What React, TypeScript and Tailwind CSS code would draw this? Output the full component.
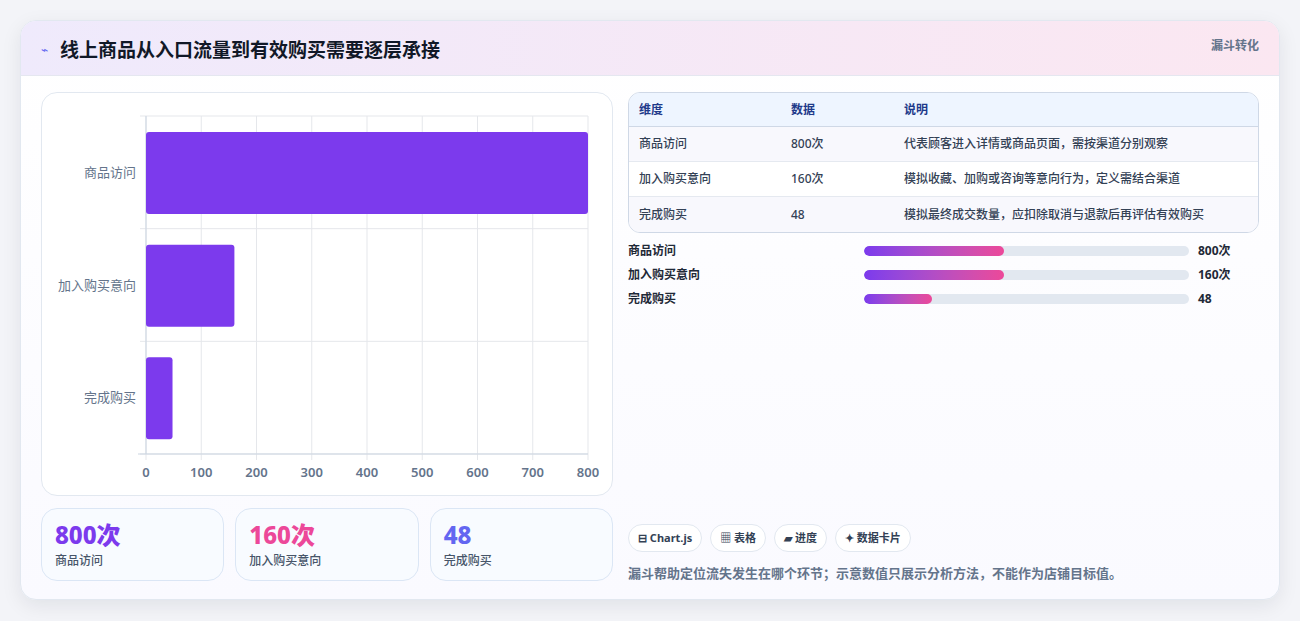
import React from "react";

const F = { fontFamily: '"Noto Sans", "Noto Sans CJK SC", sans-serif' };

function Chart() {
  const x0 = 104, x1 = 546, top = 23, bot = 361;
  const ticks = [0, 100, 200, 300, 400, 500, 600, 700, 800];
  const sx = (v: number) => x0 + ((x1 - x0) * v) / 800;
  const band = (bot - top) / 3;
  const data = [["商品访问", 800], ["加入购买意向", 160], ["完成购买", 48]] as const;
  return (
    <svg width="572" height="402" className="block">
      {ticks.map((t) => (
        <line key={t} x1={sx(t)} x2={sx(t)} y1={top} y2={bot + 6} stroke="#e5e7eb" />
      ))}
      {[0, 1, 2, 3].map((i) => (
        <line key={i} x1={x0 - 6} x2={x1} y1={top + band * i} y2={top + band * i} stroke="#e5e7eb" />
      ))}
      <line x1={x0 - 8} x2={x1} y1={bot} y2={bot} stroke="#cbd5e1" />
      <line x1={x0} x2={x0} y1={top} y2={bot} stroke="#cbd5e1" />
      {data.map(([l, v], i) => {
        const y = top + band * i + 16;
        return (
          <g key={l}>
            <rect x={x0} y={y} width={sx(v) - x0} height={82} rx={3} fill="#7c3aed" />
            <text x={94} y={y + 45} textAnchor="end" fontSize="13" fill="#64748b" style={F}>{l}</text>
          </g>
        );
      })}
      {ticks.map((t) => (
        <text key={t} x={sx(t)} y={384} textAnchor="middle" fontSize="13" fill="#64748b" style={F} fontWeight="600">{t}</text>
      ))}
    </svg>
  );
}

const bars = [["商品访问", "800次", "43%"], ["加入购买意向", "160次", "43%"], ["完成购买", "48", "21%"]];

export default function App() {
  return (
    <div className="w-[1300px] h-[621px] bg-[#f3f4f8] pt-5 px-5" style={F}>
      <div className="w-[1260px] h-[580px] rounded-2xl bg-gradient-to-b from-white to-[#fafaff] border border-[#e2e8f0] shadow-[0_6px_20px_rgba(15,23,42,0.08)] overflow-hidden flex flex-col">
        <div className="h-[55px] shrink-0 flex items-start justify-between px-5 bg-gradient-to-r from-[#efeafc] to-[#fbe7f1] border-b border-[#e5e7f0]">
          <div className="flex items-center gap-3 mt-[15px]">
            <span className="text-[#6366f1] text-[12px]">⌁</span>
            <h1 className="text-[19px] font-bold text-[#111827]">线上商品从入口流量到有效购买需要逐层承接</h1>
          </div>
          <div className="mt-[16px] text-[12px] font-bold text-[#64748b]">漏斗转化</div>
        </div>
        <div className="flex gap-[15px] px-5 pt-4">
          <div className="w-[572px] flex flex-col gap-3">
            <div className="h-[404px] rounded-2xl border border-[#e2e8f0] bg-white overflow-hidden">
              <Chart />
            </div>
            <div className="flex gap-[11px]">
              {[["800次", "商品访问", "text-[#7c3aed]"], ["160次", "加入购买意向", "text-[#ec4899]"], ["48", "完成购买", "text-[#6366f1]"]].map(([v, l, c]) => (
                <div key={l} className="flex-1 h-[73px] rounded-2xl border border-[#dbe6f5] bg-[#f8fbff] px-[13px] pt-[10px]">
                  <div className={`text-[24px] leading-[32px] font-extrabold ${c}`}>{v}</div>
                  <div className="text-[12px] text-[#475569] font-medium mt-[1px]">{l}</div>
                </div>
              ))}
            </div>
          </div>
          <div className="w-[633px] flex flex-col">
            <div className="rounded-xl border border-[#cfd8e6] overflow-hidden text-[12px]">
              <div className="flex h-[34px] items-center bg-[#eef5ff] border-b border-[#cfd8e6] font-bold text-[#1e3a8a] px-[10px]">
                <div className="w-[152px]">维度</div><div className="w-[113px]">数据</div><div>说明</div>
              </div>
              {[["商品访问", "800次", "代表顾客进入详情或商品页面，需按渠道分别观察"], ["加入购买意向", "160次", "模拟收藏、加购或咨询等意向行为，定义需结合渠道"], ["完成购买", "48", "模拟最终成交数量，应扣除取消与退款后再评估有效购买"]].map((r, i) => (
                <div key={i} className={`flex h-[35px] items-center px-[10px] font-medium text-[#334155] ${i % 2 ? "bg-white" : "bg-[#f8f8fd]"} ${i < 2 ? "border-b border-[#e5e9f0]" : ""}`}>
                  <div className="w-[152px]">{r[0]}</div><div className="w-[113px]">{r[1]}</div><div>{r[2]}</div>
                </div>
              ))}
            </div>
            <div className="flex flex-col gap-[6px] mt-[9px]">
              {bars.map(([l, v, w]) => (
                <div key={l} className="flex items-center h-[18px] text-[12px] font-semibold text-[#1f2937]">
                  <div className="w-[236px]">{l}</div>
                  <div className="w-[325px] h-[10px] rounded-full bg-[#e2e8f0] overflow-hidden">
                    <div className="h-full rounded-full bg-gradient-to-r from-[#7c3aed] to-[#ec4899]" style={{ width: w }} />
                  </div>
                  <div className="ml-[9px] font-bold">{v}</div>
                </div>
              ))}
            </div>
            <div className="flex gap-2 mt-[216px]">
              {["⊟ Chart.js", "▦ 表格", "▰ 进度", "✦ 数据卡片"].map((c) => (
                <div key={c} className="h-[28px] px-[9px] flex items-center rounded-full border border-[#e2e8f0] bg-white text-[11px] font-bold text-[#334155]">{c}</div>
              ))}
            </div>
            <div className="mt-[12px] text-[13px] font-bold text-[#64748b]">漏斗帮助定位流失发生在哪个环节；示意数值只展示分析方法，不能作为店铺目标值。</div>
          </div>
        </div>
      </div>
    </div>
  );
}
